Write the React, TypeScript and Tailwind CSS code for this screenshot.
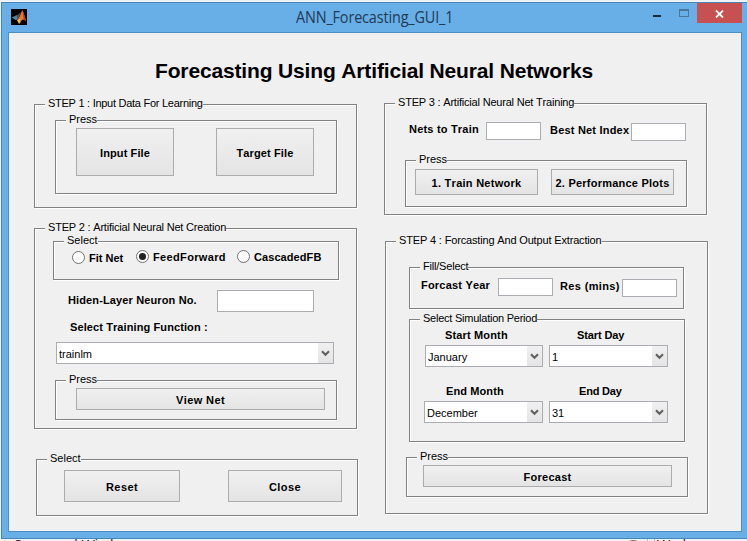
import type { ReactNode } from "react";

function Group({ title, className, tight = "tracking-[-0.2px]", children }: { title: string; className: string; tight?: string; children: ReactNode }) {
  return (
    <section className={`relative flex flex-col items-start border border-[#828282] shadow-[inset_1px_1px_0_#fff,1px_1px_0_#fff] ${className}`}>
      <h2 className={`absolute -top-[9px] left-[10px] bg-[#f0f0f0] pl-[3px] text-[11px] leading-[14px] whitespace-nowrap ${tight}`}>{title}</h2>
      {children}
    </section>
  );
}

function Label({ children, className = "" }: { children: ReactNode; className?: string }) {
  return <div className={`h-[14px] shrink-0 text-[11px] leading-[14px] font-bold whitespace-nowrap ${className}`}>{children}</div>;
}

function Button({ children, className = "" }: { children: ReactNode; className?: string }) {
  return (
    <button className={`flex shrink-0 items-center justify-center border border-[#acacac] bg-linear-to-b from-[#f0f0f0] to-[#e4e4e4] pt-[2px] text-[11px] leading-[14px] font-bold whitespace-nowrap ${className}`}>
      {children}
    </button>
  );
}

function Field({ className = "" }: { className?: string }) {
  return <div className={`shrink-0 border border-[#abadb3] bg-white ${className}`} />;
}

function Dropdown({ value, className = "" }: { value: string; className?: string }) {
  return (
    <div className={`flex h-[22px] shrink-0 border border-[#abadb3] bg-white text-[11px] ${className}`}>
      <span className="flex-1 pt-[4px] pl-[2px] leading-[14px]">{value}</span>
      <span className="flex w-[15px] items-center justify-center bg-linear-to-b from-[#f0f0f0] to-[#e4e4e4]">
        <svg width="9" height="7" viewBox="0 0 9 7" className="mt-px">
          <path d="M1 1.2 4.5 4.7 8 1.2" fill="none" stroke="#606060" strokeWidth="2.1" />
        </svg>
      </span>
    </div>
  );
}

function Radio({ label, checked = false, className = "" }: { label: string; checked?: boolean; className?: string }) {
  return (
    <div className={`flex shrink-0 gap-[4px] ${className}`}>
      <span className="flex size-[13px] items-center justify-center rounded-full border border-[#707070] bg-white">
        {checked && <span className="size-[7px] rounded-full bg-[#212121]" />}
      </span>
      <Label>{label}</Label>
    </div>
  );
}

function MatlabLogo() {
  return (
    <svg width="16" height="16" viewBox="0 0 16 16" className="shrink-0">
      <rect width="16" height="16" fill="#000" />
      <path d="M.8 8.6 4.5 6.8 6.5 5.8 8 7.5 6 10.8 4.5 11Z" fill="#3f8fa8" />
      <path d="M5.5 6.4 7.5 5.2 9.8 3 8.6 7 6.5 10Z" fill="#5d4a52" />
      <path d="M11.3 1.2C10 3 9 8.5 6 11L8 14.8C9.5 14.5 10 11.8 11.2 10.8 12.5 10.3 13.8 11.2 15.2 12 13.8 8.5 12.8 3 11.3 1.2Z" fill="#e8762c" />
      <path d="M11.3 1.2C12.8 3 13.8 8.5 15.2 12L12.8 10.6Z" fill="#b03c20" />
      <path d="M6.2 11.2 9.3 9.4 9 13 8 14.8Z" fill="#f6bd45" />
    </svg>
  );
}

export default function App() {
  return (
    <div className="h-[541px] w-[747px] overflow-hidden bg-[#edf2f6] pt-[2px] pl-px text-black [font-family:'Liberation_Sans',Arial,sans-serif] [font-kerning:none]">
      <div className="flex h-[537px] w-[746px] flex-col border-y border-l border-[#4c86b6] bg-[#68afe8]">
        <header className="flex h-[29px] shrink-0">
          <div className="w-[50px] pt-[6px] pl-[9px]"><MatlabLogo /></div>
          <div className="flex-1 pt-[4px] pl-[244px]">
            <div className="w-[180px] origin-left scale-x-[0.9] text-[16px] leading-[20px] tracking-[-0.15px] whitespace-nowrap text-[#1f3a52] [font-family:'Open_Sans','Noto_Sans',sans-serif]">ANN_Forecasting_GUI_1</div>
          </div>
          <div className="mt-[12px] mr-[18px] h-[2px] w-[8px] bg-[#1d2b36]" />
          <div className="mt-[6px] mr-[8px] h-[8px] w-[10px] border border-t-2 border-[#4b7698]" />
          <div className="flex h-[20px] w-[45px] items-center justify-center bg-[#c75050]">
            <svg width="9" height="8" viewBox="0 0 9 8" className="mt-px">
              <path d="M1 .5 8 7.5M8 .5 1 7.5" stroke="#fff" strokeWidth="1.8" />
            </svg>
          </div>
          <div className="w-[5px]" />
        </header>
        <main className="ml-[6px] h-[500px] w-[734px] shrink-0 border border-[#4c8ec4] bg-[#f0f0f0] pt-[26px] pl-[25px]">
          <h1 className="h-[24px] pl-[121px] text-[21px] leading-[24px] font-bold tracking-[-0.15px] whitespace-nowrap">Forecasting Using Artificial Neural Networks</h1>
          <div className="flex items-start gap-[26px]">
            <div className="w-[324px]">
              <Group title="STEP 1 : Input Data For Learning" tight="tracking-[-0.27px]" className="mt-[21px] h-[104px] w-[323px]">
                <Group title="Press" tight="" className="mt-[15px] ml-[20px] h-[74px] w-[282px]">
                  <div className="mt-[7px] ml-[20px] flex gap-[42px]">
                    <Button className="h-[48px] w-[98px] tracking-[0.12px]">Input File</Button>
                    <Button className="h-[48px] w-[98px] tracking-[0.12px]">Target File</Button>
                  </div>
                </Group>
              </Group>
              <Group title="STEP 2 : Artificial Neural Net Creation" className="mt-[20px] h-[201px] w-[323px]">
                <Group title="Select" tight="" className="mt-[12px] ml-[18px] h-[39px] w-[286px]">
                  <div className="flex items-start pt-[8px] pl-[18px]">
                    <Radio label="Fit Net" className="w-[64px] pt-px" />
                    <Radio label="FeedForward" checked className="w-[101px] tracking-[0.35px]" />
                    <Radio label="CascadedFB" className="tracking-[0.08px]" />
                  </div>
                </Group>
                <div className="mt-[10px] ml-[33px] flex">
                  <Label className="mt-[3px] w-[149px] tracking-[0.13px]">Hiden-Layer Neuron No.</Label>
                  <Field className="h-[22px] w-[97px]" />
                </div>
                <Label className="mt-[8px] ml-[35px] tracking-[0.1px]">Select Training Function :</Label>
                <Dropdown value="trainlm" className="mt-[8px] ml-[21px] w-[278px]" />
                <Group title="Press" tight="" className="mt-[16px] ml-[20px] h-[40px] w-[282px]">
                  <Button className="mt-[7px] ml-[20px] h-[22px] w-[249px] tracking-[0.4px]">View Net</Button>
                </Group>
              </Group>
              <Group title="Select" tight="" className="mt-[30px] ml-[2px] h-[57px] w-[322px]">
                <div className="mt-[10px] ml-[27px] flex gap-[48px]">
                  <Button className="h-[32px] w-[116px] tracking-[0.4px]">Reset</Button>
                  <Button className="h-[32px] w-[114px] tracking-[0.4px]">Close</Button>
                </div>
              </Group>
            </div>
            <div className="w-[324px]">
              <Group title="STEP 3 : Artificial Neural Net Training" className="mt-[20px] h-[112px] w-[323px]">
                <div className="mt-[18px] ml-[24px] flex h-[19px] items-start">
                  <Label className="w-[77px] tracking-[0.2px]">Nets to Train</Label>
                  <Field className="h-[18px] w-[55px]" />
                  <Label className="mt-px ml-[9px] w-[81px] tracking-[0.2px]">Best Net Index</Label>
                  <Field className="mt-px h-[18px] w-[55px]" />
                </div>
                <Group title="Press" tight="" className="mt-[19px] ml-[20px] h-[47px] w-[282px]">
                  <div className="mt-[8px] ml-[9px] flex gap-[13px]">
                    <Button className="h-[26px] w-[123px] tracking-[0.27px]">1. Train Network</Button>
                    <Button className="h-[26px] w-[123px] tracking-[0.23px]">2. Performance Plots</Button>
                  </div>
                </Group>
              </Group>
              <Group title="STEP 4 : Forcasting And Output Extraction" tight="tracking-[-0.16px]" className="mt-[26px] ml-px h-[273px] w-[323px]">
                <Group title="Fill/Select" className="mt-[25px] ml-[23px] h-[42px] w-[275px]">
                  <div className="mt-[10px] ml-[11px] flex items-start">
                    <Label className="w-[77px] tracking-[0.2px]">Forcast Year</Label>
                    <Field className="h-[18px] w-[55px]" />
                    <Label className="mt-px ml-[7px] w-[62px] tracking-[0.35px]">Res (mins)</Label>
                    <Field className="mt-px h-[18px] w-[55px]" />
                  </div>
                </Group>
                <Group title="Select Simulation Period" tight="tracking-[-0.24px]" className="mt-[10px] ml-[23px] h-[123px] w-[276px]">
                  <div className="flex pt-[8px]">
                    <div className="w-[139px]">
                      <Label className="ml-[35px] tracking-[0.15px]">Start Month</Label>
                      <Dropdown value="January" className="mt-[3px] ml-[15px] w-[118px]" />
                      <Label className="mt-[17px] ml-[36px] tracking-[0.1px]">End Month</Label>
                      <Dropdown value="December" className="mt-[3px] ml-[14px] w-[119px]" />
                    </div>
                    <div className="w-[119px]">
                      <Label className="ml-[28px] tracking-[-0.12px]">Start Day</Label>
                      <Dropdown value="1" className="mt-[3px] w-[119px]" />
                      <Label className="mt-[17px] ml-[30px] tracking-[-0.2px]">End Day</Label>
                      <Dropdown value="31" className="mt-[3px] w-[119px]" />
                    </div>
                  </div>
                </Group>
                <Group title="Press" tight="" className="mt-[15px] ml-[20px] h-[40px] w-[282px]">
                  <Button className="mt-[7px] ml-[16px] h-[22px] w-[249px] tracking-[0.27px]">Forecast</Button>
                </Group>
              </Group>
            </div>
          </div>
        </main>
      </div>
      <footer className="flex h-[2px] overflow-hidden text-[14px] leading-[16px] text-[#333]">
        <span className="-mt-[2px] ml-[12px] w-[614px]">Command Window</span>
        <span className="mt-px mr-[6px] h-[12px] w-[13px] rounded-full border border-[#777]" />
        <span className="mr-[2px] ml-px h-[3px] w-[8px] border-x border-[#bbb]" />
        <span className="-mt-[2px]">Workspace</span>
      </footer>
    </div>
  );
}
